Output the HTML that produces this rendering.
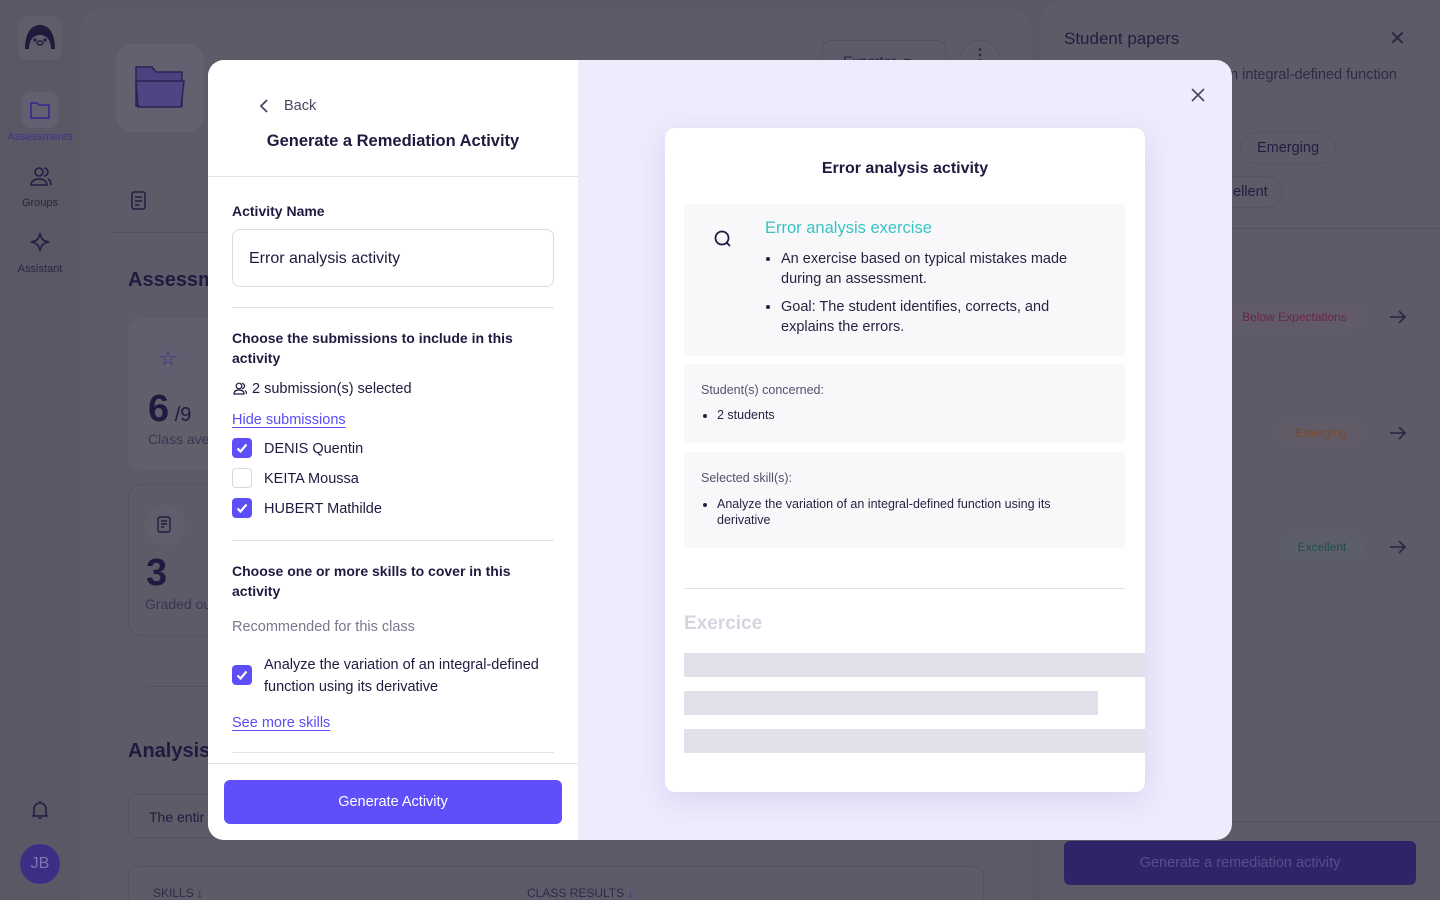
<!DOCTYPE html>
<html><head><meta charset="utf-8"><style>
*{box-sizing:border-box;margin:0;padding:0}
html,body{width:1440px;height:900px;overflow:hidden}
body{background:#5a5865;font-family:"Liberation Sans",sans-serif;color:#22193f;position:relative}
.a{position:absolute}
</style></head><body>
<div class="a" style="left:80px;top:8px;width:952px;height:892px;background:#5e5b69;border-radius:24px 24px 0 0"></div>
<div class="a" style="left:1040px;top:0;width:400px;height:900px;background:#5e5b69;border-radius:24px 0 0 0"></div>
<div class="a" style="left:18px;top:16px;width:44px;height:44px;background:#615e6c;border-radius:10px"></div>
<svg class="a" style="left:23px;top:23px" width="34" height="28" viewBox="0 0 34 28"><path d="M2 26 C2 9 9 2 17 2 C25 2 32 9 32 26 L28 26 C28 18 24 12 17 12 C10 12 6 18 6 26 Z" fill="#221a3d"/><circle cx="12" cy="17" r="1.6" fill="#221a3d"/><circle cx="22" cy="17" r="1.6" fill="#221a3d"/><ellipse cx="17" cy="20" rx="3" ry="2" fill="none" stroke="#221a3d" stroke-width="1.4"/></svg>
<div class="a" style="left:22px;top:92px;width:36px;height:36px;background:#625f70;border-radius:8px"></div>
<svg class="a" style="left:30px;top:101px" width="20" height="18" viewBox="0 0 20 18"><path d="M1 2h6l2 2h10v13H1z" fill="none" stroke="#3a2f8a" stroke-width="1.8"/></svg>
<div class="a" style="left:0;top:131px;width:80px;text-align:center;font-size:11px;color:#3d338c">Assessments</div>
<svg class="a" style="left:30px;top:166px" width="22" height="20" viewBox="0 0 22 20"><circle cx="9" cy="6" r="4" fill="none" stroke="#241c40" stroke-width="1.6"/><path d="M1 19c0-4 4-6 8-6s8 2 8 6z" fill="none" stroke="#241c40" stroke-width="1.6"/><path d="M14 2a4 4 0 0 1 0 8M18 13c2 1 3 3 3 6" fill="none" stroke="#241c40" stroke-width="1.6"/></svg>
<div class="a" style="left:0;top:197px;width:80px;text-align:center;font-size:11px;color:#2a2540">Groups</div>
<svg class="a" style="left:30px;top:232px" width="20" height="20" viewBox="0 0 20 20"><path d="M10 1 C11 7 13 9 19 10 C13 11 11 13 10 19 C9 13 7 11 1 10 C7 9 9 7 10 1Z" fill="none" stroke="#241c40" stroke-width="1.6"/></svg>
<div class="a" style="left:0;top:263px;width:80px;text-align:center;font-size:11px;color:#2a2540">Assistant</div>
<svg class="a" style="left:31px;top:800px" width="18" height="20" viewBox="0 0 18 20"><path d="M3 15V9a6 6 0 0 1 12 0v6l1 1H2z M7 18h4 M9 1v2" fill="none" stroke="#241c40" stroke-width="1.6"/></svg>
<div class="a" style="left:20px;top:844px;width:40px;height:40px;border-radius:50%;background:#3a2e85;color:#7e76b5;font-size:16px;text-align:center;line-height:40px">JB</div>

<div class="a" style="left:116px;top:44px;width:88px;height:88px;background:#63606f;border-radius:16px"></div>
<svg class="a" style="left:133px;top:63px" width="54" height="50" viewBox="0 0 54 50"><path d="M3 4h16l4 5h26v34H3z" fill="#4b4380" stroke="#2b2452" stroke-width="1.5"/><path d="M3 18h48l-3 26H5z" fill="#4d4584" stroke="#2b2452" stroke-width="1.5"/></svg>
<svg class="a" style="left:131px;top:191px" width="18" height="20" viewBox="0 0 18 20"><rect x="1" y="1" width="13" height="17" rx="2" fill="none" stroke="#241c40" stroke-width="1.5"/><path d="M4 6h7M4 10h7M4 14h4" stroke="#241c40" stroke-width="1.5"/></svg>
<div class="a" style="left:112px;top:232px;width:96px;height:1px;background:#55525f"></div>
<div class="a" style="left:128px;top:269px;font-size:20px;font-weight:bold;color:#22193f">Assessm</div>
<div class="a" style="left:128px;top:318px;width:100px;height:152px;background:#625f6d;border-radius:14px"></div>
<div class="a" style="left:148px;top:338px;width:40px;height:40px;background:#615e6f;border-radius:50%"></div>
<div class="a" style="left:159px;top:346px;font-size:20px;color:#3a2f8a">☆</div>
<div class="a" style="left:148px;top:388px;font-size:38px;font-weight:bold">6<span style="font-size:20px;font-weight:normal"> /9</span></div>
<div class="a" style="left:148px;top:431px;font-size:14px;color:#3b3550">Class ave</div>
<div class="a" style="left:128px;top:484px;width:100px;height:152px;background:#5e5b69;border:1px solid #57545f;border-radius:14px"></div>
<div class="a" style="left:145px;top:505px;width:40px;height:40px;background:#615e6c;border-radius:50%"></div>
<svg class="a" style="left:157px;top:516px" width="16" height="18" viewBox="0 0 16 18"><rect x="1" y="1" width="12" height="15" rx="2" fill="none" stroke="#241c40" stroke-width="1.4"/><path d="M4 5h6M4 8h6M4 11h3" stroke="#241c40" stroke-width="1.4"/></svg>
<div class="a" style="left:146px;top:552px;font-size:38px;font-weight:bold">3</div>
<div class="a" style="left:145px;top:596px;font-size:14px;color:#3b3550">Graded ou</div>
<div class="a" style="left:145px;top:686px;width:80px;height:1px;background:#55525f"></div>
<div class="a" style="left:128px;top:740px;font-size:20px;font-weight:bold">Analysis</div>
<div class="a" style="left:128px;top:794px;width:100px;height:44px;border:1px solid #55525f;border-radius:8px;padding:14px 20px;font-size:14px;color:#22193f">The entir</div>
<div class="a" style="left:128px;top:866px;width:856px;height:60px;border:1px solid #55525f;border-radius:10px"></div>
<div class="a" style="left:153px;top:886px;font-size:12px;color:#2f2a45">SKILLS ↓</div>
<div class="a" style="left:527px;top:886px;font-size:12px;color:#2f2a45">CLASS RESULTS <span style="color:#3a2f8a">↓</span></div>
<div class="a" style="left:822px;top:40px;width:124px;height:40px;border:1px solid #55525f;border-radius:8px;padding:12px 20px;font-size:14px;color:#2a2540">Exporter &nbsp;▾</div>
<div class="a" style="left:959px;top:40px;width:42px;height:42px;border:1px solid #55525f;border-radius:50%;text-align:center;font-size:16px;line-height:30px;color:#2a2540;font-weight:bold">⋮</div>

<div class="a" style="left:1064px;top:29px;font-size:17px;color:#231c3d">Student papers</div>
<div class="a" style="left:1389px;top:26px;font-size:20px;color:#2a2540">✕</div>
<div class="a" style="left:1230px;top:67px;font-size:14.5px;color:#2f2a45">n integral-defined function</div>
<div class="a" style="left:1240px;top:132px;width:96px;height:32px;border:1px solid #57545f;border-radius:16px;text-align:center;line-height:31px;font-size:14.5px;color:#241c40">Emerging</div>
<div class="a" style="left:1200px;top:176px;width:83px;height:32px;border:1px solid #57545f;border-radius:16px;line-height:31px;font-size:14.5px;color:#241c40;padding-left:32px">ellent</div>
<div class="a" style="left:1040px;top:228px;width:400px;height:1px;background:#55525f"></div>
<div class="a" style="left:1226px;top:305px;width:137px;height:24px;background:#615a68;border-radius:12px;text-align:center;line-height:24px;font-size:12px;color:#6b2548">Below Expectations</div>
<div class="a" style="left:1279px;top:421px;width:84px;height:24px;background:#605b66;border-radius:12px;text-align:center;line-height:24px;font-size:12px;color:#7b4a2c">Emerging</div>
<div class="a" style="left:1281px;top:535px;width:82px;height:24px;background:#5d5e6b;border-radius:12px;text-align:center;line-height:24px;font-size:12px;color:#1f4d4e">Excellent</div>
<svg class="a" style="left:1389px;top:309px" width="18" height="16" viewBox="0 0 18 16"><path d="M1 8h15M10 2l6 6-6 6" fill="none" stroke="#2a2540" stroke-width="1.6"/></svg>
<svg class="a" style="left:1389px;top:425px" width="18" height="16" viewBox="0 0 18 16"><path d="M1 8h15M10 2l6 6-6 6" fill="none" stroke="#2a2540" stroke-width="1.6"/></svg>
<svg class="a" style="left:1389px;top:539px" width="18" height="16" viewBox="0 0 18 16"><path d="M1 8h15M10 2l6 6-6 6" fill="none" stroke="#2a2540" stroke-width="1.6"/></svg>
<div class="a" style="left:1040px;top:821px;width:400px;height:1px;background:#55525f"></div>
<div class="a" style="left:1064px;top:841px;width:352px;height:44px;background:#2e2468;border-radius:6px;text-align:center;line-height:44px;font-size:14.5px;color:#584f8a">Generate a remediation activity</div>

<div class="a" style="left:208px;top:60px;width:1024px;height:780px;border-radius:16px;overflow:hidden;background:#eeebfd">
 <div class="a" style="left:0;top:0;width:370px;height:780px;background:#fff">
  <svg class="a" style="left:50px;top:38px" width="12" height="16" viewBox="0 0 12 16"><path d="M9 2 3 8l6 6" fill="none" stroke="#4a4560" stroke-width="1.8"/></svg>
  <div class="a" style="left:76px;top:38px;font-size:14.5px;color:#4a4560">Back</div>
  <div class="a" style="left:0;top:72px;width:370px;text-align:center;font-size:16.5px;font-weight:bold;color:#22193f">Generate a Remediation Activity</div>
  <div class="a" style="left:0;top:116px;width:370px;height:1px;background:#e4e2ec"></div>
  <div class="a" style="left:24px;top:143px;font-size:14px;font-weight:bold">Activity Name</div>
  <div class="a" style="left:24px;top:169px;width:322px;height:58px;border:1px solid #dcdae6;border-radius:8px;padding:20px 16px;font-size:16px;color:#22193f">Error analysis activity</div>
  <div class="a" style="left:24px;top:247px;width:322px;height:1px;background:#e4e2ec"></div>
  <div class="a" style="left:24px;top:268px;width:300px;font-size:14px;font-weight:bold;line-height:20px">Choose the submissions to include in this activity</div>
  <svg class="a" style="left:25px;top:322px" width="14" height="13" viewBox="0 0 14 13"><circle cx="6" cy="4" r="2.8" fill="none" stroke="#22193f" stroke-width="1.2"/><path d="M1 12c0-3 2-4 5-4s5 1 5 4z" fill="none" stroke="#22193f" stroke-width="1.2"/><path d="M9 1.5a2.5 2.5 0 0 1 0 5M12 8.5c1 .6 1.5 2 1.5 3.5" fill="none" stroke="#22193f" stroke-width="1.2"/></svg>
  <div class="a" style="left:44px;top:321px;font-size:14.5px">2 submission(s) selected</div>
  <div class="a" style="left:24px;top:352px;font-size:14.5px;color:#5a4ef5;text-decoration:underline;text-underline-offset:3px">Hide submissions</div>
  <svg class="a" style="left:24px;top:378px" width="20" height="20"><rect width="20" height="20" rx="4" fill="#5d4ef8"/><path d="M5.5 10.5l3 3 6-7" fill="none" stroke="#fff" stroke-width="2.2"/></svg>
  <div class="a" style="left:56px;top:381px;font-size:14.5px">DENIS Quentin</div>
  <div class="a" style="left:24px;top:408px;width:20px;height:20px;border:1px solid #d8d6e2;border-radius:4px"></div>
  <div class="a" style="left:56px;top:411px;font-size:14.5px">KEITA Moussa</div>
  <svg class="a" style="left:24px;top:438px" width="20" height="20"><rect width="20" height="20" rx="4" fill="#5d4ef8"/><path d="M5.5 10.5l3 3 6-7" fill="none" stroke="#fff" stroke-width="2.2"/></svg>
  <div class="a" style="left:56px;top:441px;font-size:14.5px">HUBERT Mathilde</div>
  <div class="a" style="left:24px;top:480px;width:322px;height:1px;background:#e4e2ec"></div>
  <div class="a" style="left:24px;top:501px;width:300px;font-size:14px;font-weight:bold;line-height:20px">Choose one or more skills to cover in this activity</div>
  <div class="a" style="left:24px;top:559px;font-size:14.5px;color:#7a7690">Recommended for this class</div>
  <svg class="a" style="left:24px;top:605px" width="20" height="20"><rect width="20" height="20" rx="4" fill="#5d4ef8"/><path d="M5.5 10.5l3 3 6-7" fill="none" stroke="#fff" stroke-width="2.2"/></svg>
  <div class="a" style="left:56px;top:594px;width:300px;font-size:14.5px;line-height:22px">Analyze the variation of an integral-defined function using its derivative</div>
  <div class="a" style="left:24px;top:655px;font-size:14.5px;color:#5a4ef5;text-decoration:underline;text-underline-offset:3px">See more skills</div>
  <div class="a" style="left:24px;top:692px;width:322px;height:1px;background:#e4e2ec"></div>
  <div class="a" style="left:0;top:703px;width:370px;height:1px;background:#e4e2ec"></div>
  <div class="a" style="left:16px;top:720px;width:338px;height:44px;background:#5f4ffb;border-radius:6px;color:#fff;font-size:14.5px;text-align:center;line-height:44px">Generate Activity</div>
 </div>
 <svg class="a" style="left:983px;top:28px" width="14" height="14" viewBox="0 0 14 14"><path d="M1 1l12 12M13 1 1 13" stroke="#4a4560" stroke-width="1.6"/></svg>
 <div class="a" style="left:457px;top:68px;width:480px;height:664px;background:#fff;border-radius:10px;box-shadow:0 8px 28px rgba(120,110,180,.18);overflow:hidden">
  <div class="a" style="left:0;top:32px;width:480px;text-align:center;font-size:16px;font-weight:bold">Error analysis activity</div>
  <div class="a" style="left:19px;top:76px;width:441px;height:152px;background:#f8f8fb"></div>
  <svg class="a" style="left:48px;top:101px" width="20" height="20" viewBox="0 0 20 20"><circle cx="9" cy="9" r="6.5" fill="none" stroke="#22193f" stroke-width="1.8"/><path d="M13.5 13.5 17 17" stroke="#22193f" stroke-width="1.8"/></svg>
  <div class="a" style="left:100px;top:91px;font-size:16.5px;color:#39c2c2">Error analysis exercise</div>
  <ul class="a" style="left:116px;top:121px;width:320px;font-size:14.5px;line-height:20px;color:#2a2242">
   <li style="margin-bottom:8px">An exercise based on typical mistakes made during an assessment.</li>
   <li>Goal: The student identifies, corrects, and explains the errors.</li>
  </ul>
  <div class="a" style="left:19px;top:236px;width:441px;height:79px;background:#f8f8fb"></div>
  <div class="a" style="left:36px;top:255px;font-size:12.5px;color:#55506a">Student(s) concerned:</div>
  <ul class="a" style="left:52px;top:280px;font-size:12.5px;color:#2a2242"><li>2 students</li></ul>
  <div class="a" style="left:19px;top:324px;width:441px;height:96px;background:#f8f8fb"></div>
  <div class="a" style="left:36px;top:343px;font-size:12.5px;color:#55506a">Selected skill(s):</div>
  <ul class="a" style="left:52px;top:368px;width:370px;font-size:12.5px;line-height:16px;color:#2a2242"><li>Analyze the variation of an integral-defined function using its derivative</li></ul>
  <div class="a" style="left:19px;top:460px;width:441px;height:1px;background:#e2e0ea"></div>
  <div class="a" style="left:19px;top:485px;font-size:19px;font-weight:bold;color:#d6d4e0">Exercice</div>
  <div class="a" style="left:19px;top:525px;width:461px;height:24px;background:#e2e0ea"></div>
  <div class="a" style="left:19px;top:563px;width:414px;height:24px;background:#e2e0ea"></div>
  <div class="a" style="left:19px;top:601px;width:461px;height:24px;background:#e2e0ea"></div>
 </div>
</div>
</body></html>
